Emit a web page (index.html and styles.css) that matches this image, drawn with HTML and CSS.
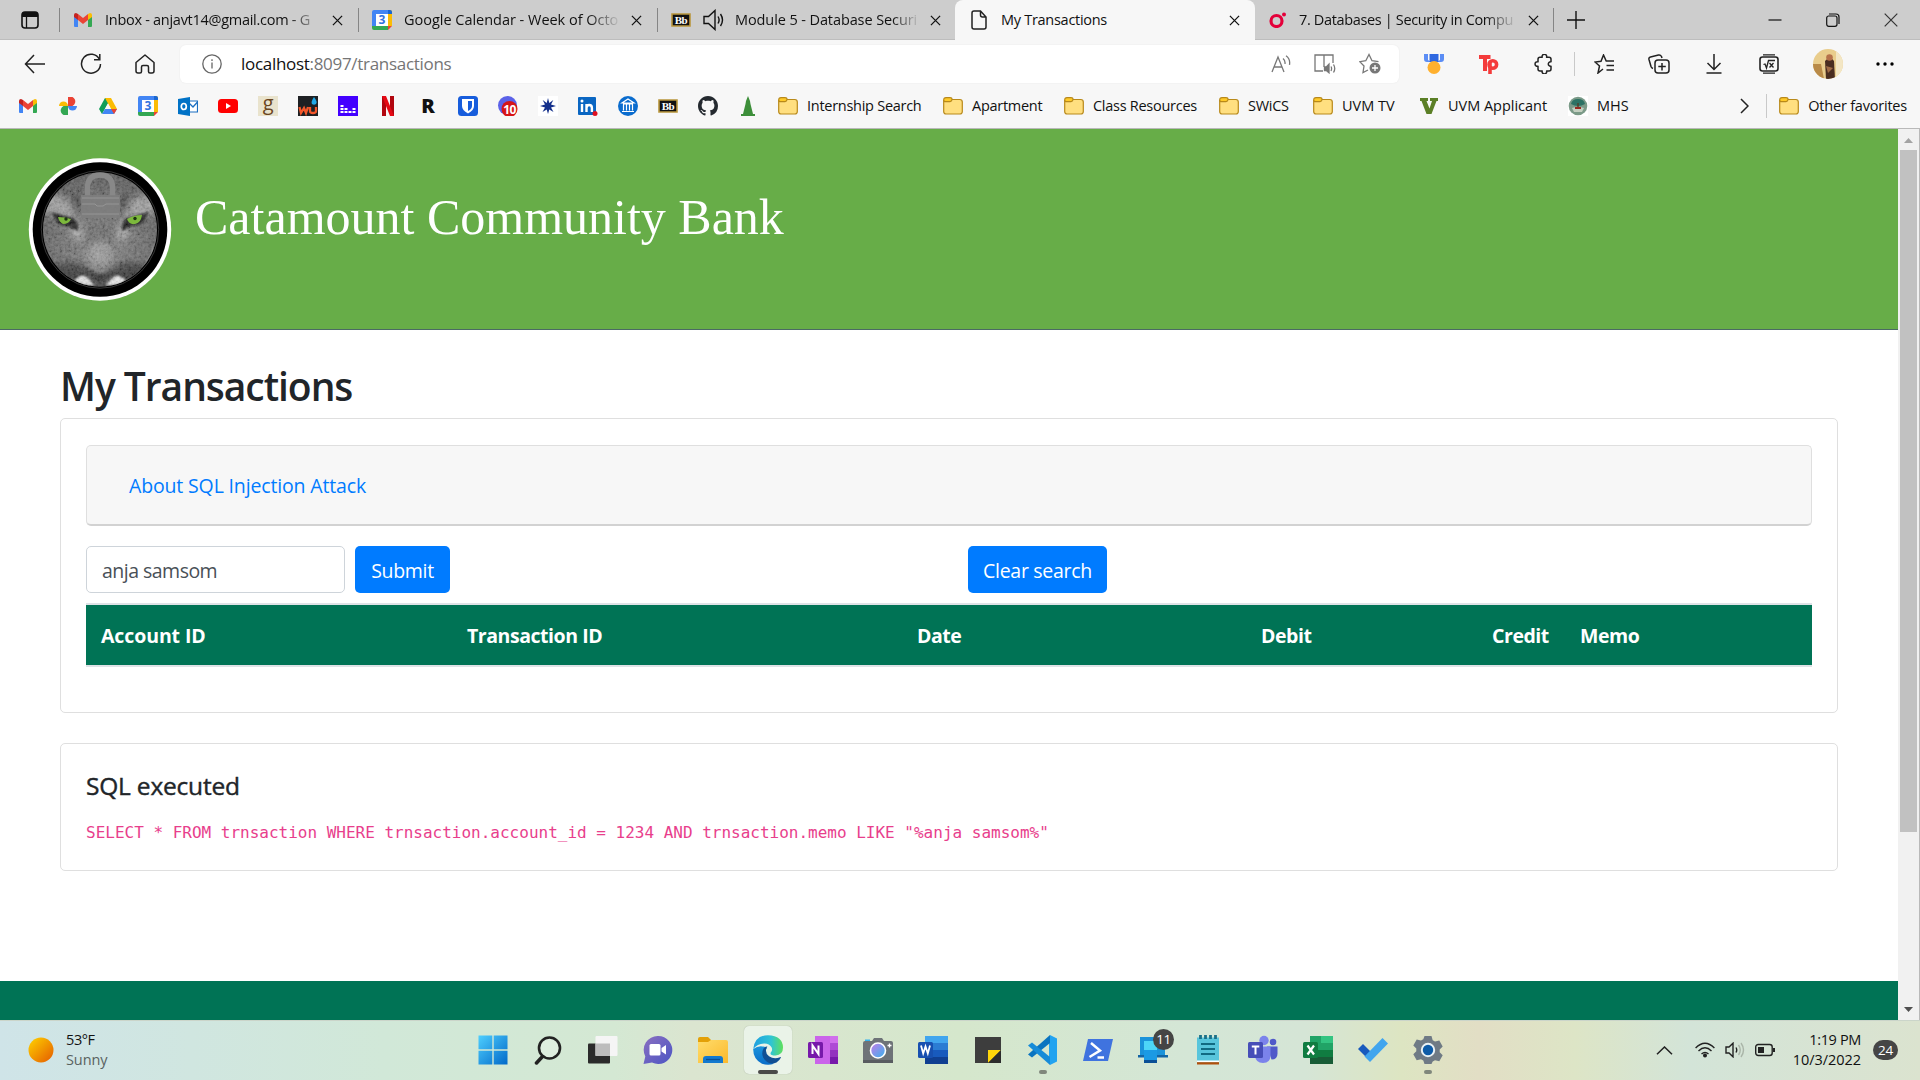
FILE: index.html
```html
<!DOCTYPE html>
<html lang="en">
<head>
<meta charset="utf-8">
<title>My Transactions</title>
<link rel="stylesheet" href="styles.css">
</head>
<body>
<svg width="0" height="0" class="defs">
  <defs>
    <linearGradient id="sun" x1="0" y1="0" x2="1" y2="1"><stop offset="0" stop-color="#ffd400"/><stop offset="1" stop-color="#e45a00"/></linearGradient>
    <linearGradient id="win" x1="0" y1="0" x2="30" y2="30" gradientUnits="userSpaceOnUse"><stop offset="0" stop-color="#4fd0ff"/><stop offset="1" stop-color="#0067c8"/></linearGradient>
    <linearGradient id="edge1" x1="0" y1="0" x2="1" y2="0"><stop offset="0" stop-color="#1f9fe0"/><stop offset=".6" stop-color="#2fc4d4"/><stop offset="1" stop-color="#5fe05a"/></linearGradient>
    <linearGradient id="edge2" x1="0" y1="0" x2="0" y2="1"><stop offset="0" stop-color="#1a93dc"/><stop offset="1" stop-color="#0a6cc8"/></linearGradient>
    <linearGradient id="chat" x1="0" y1="0" x2="1" y2="1"><stop offset="0" stop-color="#8b6fc0"/><stop offset="1" stop-color="#4b55c4"/></linearGradient>
    <linearGradient id="folderG" x1="0" y1="0" x2="1" y2="1"><stop offset="0" stop-color="#ffdc6b"/><stop offset="1" stop-color="#fbb92c"/></linearGradient>
    <linearGradient id="lens" x1="0" y1="0" x2="1" y2="1"><stop offset="0" stop-color="#c77be8"/><stop offset="1" stop-color="#35b3ee"/></linearGradient>
    <radialGradient id="fur" cx=".5" cy=".65" r=".6"><stop offset="0" stop-color="#7d7d7d"/><stop offset=".5" stop-color="#696969"/><stop offset="1" stop-color="#505050"/></radialGradient>
    <clipPath id="face"><circle cx="80" cy="79.5" r="57"/></clipPath>
    <filter id="soft"><feGaussianBlur stdDeviation="3.500"/></filter>
    <filter id="soft1"><feGaussianBlur stdDeviation="1.100"/></filter>
    <filter id="grain"><feTurbulence type="fractalNoise" baseFrequency=".35" numOctaves="3" seed="4"/><feColorMatrix type="matrix" values="1.500 0 0 0 -.25 1.500 0 0 0 -.25 1.500 0 0 0 -.25 0 0 0 0 .22"/></filter>
    <symbol id="i-close" viewBox="0 0 12 12"><path d="M1 1l10 10M11 1L1 11" stroke="#111" stroke-width="1.4" fill="none"/></symbol>
    <symbol id="i-gmail" viewBox="0 0 18 14"><path d="M0 2v11q0 1 1 1h3V6z" fill="#4285f4"/><path d="M18 2v11q0 1-1 1h-3V6z" fill="#34a853"/><path d="M0 2Q0 0 2 0l2 1v6L0 4z" fill="#c5221f"/><path d="M18 2q0-2-2-2l-2 1v6l4-3z" fill="#fbbc04"/><path d="M4 1l5 4 5-4v6l-5 4-5-4z" fill="#ea4335"/></symbol>
    <symbol id="i-cal" viewBox="0 0 20 20"><path d="M0 2q0-2 2-2h14v4H4v12H0z" fill="#4285f4"/><path d="M16 0h2q2 0 2 2v14h-4z" fill="#fbbc04"/><path d="M16 0h2q2 0 2 2v2h-4z" fill="#1967d2"/><path d="M0 16h16v4H2q-2 0-2-2z" fill="#34a853"/><path d="M16 16h4l-4 4z" fill="#ea4335"/><path d="M4 4h12v12H4z" fill="#fff"/><text x="10" y="14.2" text-anchor="middle" class="t-cal">3</text></symbol>
    <symbol id="i-bb" viewBox="0 0 20 14"><path d="M1 1h18v12H1z" fill="#111" stroke="#b9963c" stroke-width="1.6"/><text x="10" y="11" text-anchor="middle" class="t-bb">Bb</text></symbol>
    <symbol id="i-folder" viewBox="0 0 20 18"><path d="M.7 3v11.500q0 2.500 2.500 2.500h13.600q2.500 0 2.500-2.500V5q0-2.500-2.500-2.500H9" fill="#ffdf80" stroke="#b8891a" stroke-width="1.200"/><path d="M.7 3q0-2.300 2.300-2.300h4q2 0 2 1.800T7 4.600H2.500Q.7 4.600.7 3z" fill="#ffca28" stroke="#b8891a" stroke-width="1.200"/></symbol>
  </defs>
</svg>

<header class="tabs">
  <div class="tab-menu"><svg width="18" height="18" viewBox="0 0 18 18"><rect x="1" y="1" width="16" height="16" rx="3" fill="none" stroke="#111" stroke-width="1.600"/><path d="M1 6V4q0-3 3-3h10q3 0 3 3v2z" fill="#111"/><path d="M5.500 6v11" stroke="#111" stroke-width="1.300"/></svg></div>
  <div class="tab"><svg class="fav" width="18" height="14"><use href="#i-gmail"/></svg><span class="label fade inbox">Inbox - anjavt14@gmail.com - G</span><svg class="x" width="11" height="11"><use href="#i-close"/></svg></div>
  <div class="tab"><svg class="fav" width="20" height="20"><use href="#i-cal"/></svg><span class="label fade gcal">Google Calendar - Week of Octo</span><svg class="x" width="11" height="11"><use href="#i-close"/></svg></div>
  <div class="tab third"><svg class="fav" width="20" height="14"><use href="#i-bb"/></svg><svg class="spk" width="21" height="22" viewBox="0 0 21 22" fill="none" stroke="#111" stroke-width="1.400"><path d="M1 7.500h4.500L12 1.500v19L5.500 14.500H1zM15 7.500q2.200 3.500 0 7M17.500 5q4 6 0 12"/></svg><span class="label fade module">Module 5 - Database Securi</span><svg class="x" width="11" height="11"><use href="#i-close"/></svg></div>
  <div class="tab active"><svg class="fav" width="16" height="20" viewBox="0 0 16 20" fill="none" stroke="#222" stroke-width="1.500"><path d="M3 1h6.500L15 7v10q0 2-2 2H3q-2 0-2-2V3q0-2 2-2zM9.500 1v4q0 2 2 2H15"/></svg><span class="label">My Transactions</span><svg class="x" width="11" height="11"><use href="#i-close"/></svg></div>
  <div class="tab last"><svg class="fav" width="18" height="16" viewBox="0 0 18 16"><ellipse cx="7.500" cy="9" rx="5.500" ry="5.500" fill="none" stroke="#e4003a" stroke-width="3.200"/><circle cx="15" cy="2.500" r="2" fill="#e4003a"/></svg><span class="label fade">7. Databases | Security in Compu</span><svg class="x" width="11" height="11"><use href="#i-close"/></svg></div>
  <svg class="plus" width="18" height="18" viewBox="0 0 18 18"><path d="M9 0v18M0 9h18" stroke="#111" stroke-width="1.400"/></svg>
  <div class="win-ctl">
    <svg width="14" height="14" viewBox="0 0 14 14"><path d="M.5 7h13" stroke="#111" stroke-width="1.200"/></svg>
    <svg width="14" height="14" viewBox="0 0 14 14" fill="none" stroke="#111" stroke-width="1.200"><rect x=".7" y="3" width="10.300" height="10.300" rx="2"/><path d="M3 1h7q3 0 3 3v7"/></svg>
    <svg width="14" height="14" viewBox="0 0 14 14"><path d="M.7.7l12.600 12.600M13.300.7L.7 13.300" stroke="#333" stroke-width="1.200"/></svg>
  </div>
</header>

<nav class="toolbar">
  <div class="nav-btns">
    <svg width="22" height="20" viewBox="0 0 22 20" fill="none" stroke="#222" stroke-width="1.500"><path d="M21 10H1.500M10 1L1.500 10l8.500 9"/></svg>
    <svg width="22" height="22" viewBox="0 0 22 22" fill="none" stroke="#222" stroke-width="1.500"><path d="M19.500 6.500A9.500 9.500 0 1 0 20.500 11M19.800 1v5.800H14"/></svg>
    <svg width="20" height="20" viewBox="0 0 20 20" fill="none" stroke="#222" stroke-width="1.500" stroke-linejoin="round"><path d="M1 8.500L10 1l9 7.500V17q0 2-2 2h-2q-1.500 0-1.500-1.500V13q0-1.500-1.500-1.500H8Q6.500 11.500 6.500 13v4.500Q6.500 19 5 19H3q-2 0-2-2z"/></svg>
  </div>
  <div class="address">
    <svg width="20" height="20" viewBox="0 0 20 20" fill="none" stroke="#666" stroke-width="1.300"><circle cx="10" cy="10" r="9.200"/><path d="M10 8.500v6M10 5.200v1.700"/></svg>
    <span class="url"><b>localhost</b>:8097/transactions</span>
    <div class="addr-icons">
      <svg width="20" height="18" viewBox="0 0 20 18" fill="none" stroke="#777" stroke-width="1.300"><path d="M1 17L7 2l6 15M3.200 12h7.700M12 3.500q2.500 2 2 5.500M15 .8q4.500 3 3.500 9"/></svg>
      <svg width="22" height="20" viewBox="0 0 22 20" fill="none" stroke="#777" stroke-width="1.300"><path d="M9 17H1V1h9v12M10 1h9v8"/><path d="M10.500 13h1.800l2.700-2.800v8.600L12.300 16.500h-1.800z" fill="#777"/><path d="M17 12.500q1.200 2 0 4.500M19.500 10.500q2.500 4 0 8"/></svg>
      <svg width="22" height="21" viewBox="0 0 22 21" fill="none" stroke="#777" stroke-width="1.300"><path d="M9 17l-5 2.500 1-6.500-4.200-4.300 6-1L10 1.500l3 6.200 6.500 1"/><circle cx="16" cy="15" r="5.500" fill="#777" stroke="none"/><path d="M16 12v6M13 15h6" stroke="#fff"/></svg>
    </div>
  </div>
  <div class="ext-icons">
    <svg width="20" height="20" viewBox="0 0 20 20"><path d="M0 0h4v6l3 2H3Q0 8 0 5zM20 0h-4v6l-3 2h4q3 0 3-3z" fill="#5b8df5"/><path d="M5.500 0h9v8h-9z" fill="#2f68e0"/><circle cx="10" cy="13.500" r="6.500" fill="#ffb02e"/></svg>
    <svg width="20" height="20" viewBox="0 0 20 20" fill="none" stroke="#f43b3b" stroke-width="4"><path d="M0 3h11.500M6 3v14"/><circle cx="13.800" cy="10.500" r="3.800" stroke-width="3.600"/><path d="M11 8v12" stroke-width="3.600"/></svg>
    <svg width="20" height="20" viewBox="0 0 20 20" fill="none" stroke="#222" stroke-width="1.500" stroke-linejoin="round"><path d="M6 3.200h2.200a2.300 2.300 0 1 1 4.400 0H15q2 0 2 2v2.600h-.5a2.200 2.200 0 1 0 0 4.400h.5V15q0 2-2 2h-2.400a2.300 2.300 0 1 1-4.400 0H6q-2 0-2-2v-2.800a2.300 2.300 0 1 1 0-4.400V5.200q0-2 2-2z"/></svg>
    <i class="sep"></i>
    <svg width="21" height="20" viewBox="0 0 21 20" fill="none" stroke="#222" stroke-width="1.500"><path d="M9 15l-5 4 1.500-7L1 8l6-.800L9.500 1l2.700 6H20M12.500 11.500H20M12.500 16H20"/></svg>
    <svg width="22" height="20" viewBox="0 0 22 20" fill="none" stroke="#222" stroke-width="1.500"><rect x="7" y="6" width="14" height="13" rx="3"/><path d="M14 9v7.500M10.300 12.600h7.500M5 14.500q-1.500-.5-2-2L1 5.500Q.5 3.500 2.500 3l8-2q2-.400 3 1.500l.5 1.500"/></svg>
    <svg width="16" height="20" viewBox="0 0 16 20" fill="none" stroke="#222" stroke-width="1.500"><path d="M8 0v15M1.500 9L8 15.500 14.500 9M.5 19h15"/></svg>
    <svg width="20" height="20" viewBox="0 0 20 20" fill="none" stroke="#222" stroke-width="1.600"><rect x="1" y="3" width="18" height="14" rx="2.500"/><path d="M4 .9h12M4 19.100h12M4.500 10.500L6 10l1.500 4L9.500 6.500H16M10.500 9l4 4.500M14.500 9l-4 4.500" stroke-width="1.300"/></svg>
    <svg width="30" height="30" viewBox="0 0 30 30"><clipPath id="av"><circle cx="15" cy="15" r="15"/></clipPath><g clip-path="url(#av)"><path d="M0 0h30v30H0z" fill="#e9cd8c"/><path d="M23 0h7v30h-7z" fill="#f3e6c4"/><path d="M0 15h8l3 15H0z" fill="#b98a48"/><path d="M12 12q5-6 9 0l1 18h-9z" fill="#4a2d20"/><circle cx="16.500" cy="8.500" r="3.300" fill="#b5714a"/><path d="M13 17l7 2-5 5z" fill="#a06b45"/></g></svg>
    <svg width="18" height="4" viewBox="0 0 18 4"><circle cx="2" cy="2" r="1.700"/><circle cx="9" cy="2" r="1.700"/><circle cx="16" cy="2" r="1.700"/></svg>
  </div>
</nav>

<nav class="bookmarks">
  <div class="bm-icons">
    <span><svg width="18" height="14"><use href="#i-gmail"/></svg></span>
    <span><svg width="18" height="18" viewBox="0 0 18 18"><path d="M9 0v9h4.500A4.700 4.700 0 0 0 9 0z" fill="#ea4335"/><path d="M0 9a4.500 4.500 0 0 1 9 0z" fill="#fbbc04"/><path d="M18 9H9a4.500 4.500 0 0 0 9 0z" fill="#4285f4"/><path d="M9 18V9H4.500A4.700 4.700 0 0 0 9 18z" fill="#34a853"/></svg></span>
    <span><svg width="18" height="16" viewBox="0 0 18 16"><path d="M6 0h6L3 16l-3-5z" fill="#0f9d58"/><path d="M6 0h6l6 11h-6z" fill="#fbbc04"/><path d="M6 11h12l-3 5H3z" fill="#4285f4"/><path d="M12 11h6l-3 5z" fill="#ea4335"/><path d="M9 5.500l3 5.500H6z" fill="#f7f7f7"/></svg></span>
    <span><svg width="20" height="20"><use href="#i-cal"/></svg></span>
    <span><svg width="20" height="19" viewBox="0 0 20 19"><path d="M11 4h8.500v11H11z" fill="#fff" stroke="#1b6fc2" stroke-width="1.200"/><path d="M11 6l4 4 4.500-5" stroke="#1b6fc2" stroke-width="1.300" fill="none"/><path d="M0 2l12-2v19L0 17z" fill="#0072c6"/><ellipse cx="5.800" cy="9.500" rx="2.500" ry="3" fill="none" stroke="#fff" stroke-width="1.700"/></svg></span>
    <span><svg width="20" height="14" viewBox="0 0 20 14"><rect width="20" height="14" rx="3.500" fill="#f00"/><path d="M8 4l5 3-5 3z" fill="#fff"/></svg></span>
    <span><i class="sq good">g</i></span>
    <span><svg width="20" height="20" viewBox="0 0 20 20"><path d="M0 0h20v20H0z" fill="#1e2023"/><path d="M1.500 11l1.500 6 3-5 2 5 2-6M12 11v4q0 2 3 2t3-2v-4" fill="none" stroke="#f4572a" stroke-width="2.300"/><path d="M16 1q4 5 2 7-2 1.500-4 0-1.500-2 2-7z" fill="#1fa8e8"/></svg></span>
    <span><svg width="20" height="20" viewBox="0 0 20 20"><path d="M0 0h20v20H0z" fill="#4300ff"/><path d="M2.500 9h3v2h-3zM2.500 12h3v2h-3zM2.500 15h3v2h-3zM6.500 12h3v2h-3zM6.500 15h3v2h-3zM10.500 15h3v2h-3zM14.500 12h3v2h-3zM14.500 15h3v2h-3z" fill="#fff"/></svg></span>
    <span><svg width="12" height="20" viewBox="0 0 12 20"><path d="M0 0h4v20l-4 .300zM8 0h4v20H8z" fill="#b1060f"/><path d="M0 0h4l8 20H8z" fill="#e50914"/></svg></span>
    <span><i class="rr">R</i></span>
    <span><svg width="20" height="20" viewBox="0 0 20 20"><rect width="20" height="20" rx="3.500" fill="#175ddc"/><path d="M4 3h12v7q0 4-6 7.500Q4 14 4 10z" fill="#fff"/><path d="M10 5h4v5q0 3-4 5z" fill="#175ddc"/></svg></span>
    <span><svg width="20" height="20" viewBox="0 0 20 20"><circle cx="9.500" cy="9.500" r="9.500" fill="#5b62e8"/><circle cx="11.500" cy="13" r="8" fill="#d61418"/><text x="11.500" y="17.500" text-anchor="middle" class="t-ten">10</text></svg></span>
    <span><svg width="20" height="20" viewBox="0 0 20 20"><path d="M0 0h20v20H0z" fill="#fff"/><path d="M10 2l1.300 5 4-3L13 8.500l5 1.500-5 1.500 2.500 4.500-4.200-2.500L10 18l-1.300-4.500L4.500 16 7 11.500 2 10l5-1.500L4.700 4l4 3z" fill="#14308c"/></svg></span>
    <span><svg width="20" height="20" viewBox="0 0 20 20"><rect y="1" width="18" height="18" rx="1" fill="#0a66c2"/><path d="M4 8v8M8.500 16V8M8.500 12q0-3 2.700-3t2.700 3v4" stroke="#fff" stroke-width="2.400" fill="none"/><circle cx="4" cy="5" r="1.500" fill="#fff"/><circle cx="17" cy="17.500" r="2.500" fill="#e01020"/></svg></span>
    <span><svg width="20" height="20" viewBox="0 0 20 20"><circle cx="10" cy="10" r="10" fill="#0a6cce"/><path d="M10 3l6 4H4zM5.500 8.500v6M8.500 8.500v6M11.500 8.500v6M14.500 8.500v6M4 15.500h12M5 8h10" fill="none" stroke="#fff" stroke-width="1.200"/></svg></span>
    <span><svg width="20" height="14"><use href="#i-bb"/></svg></span>
    <span><svg width="20" height="20" viewBox="0 0 16 16"><path fill="#24292f" d="M8 0C3.580 0 0 3.580 0 8c0 3.540 2.290 6.530 5.470 7.590.4.070.55-.17.55-.38 0-.19-.01-.82-.01-1.490-2.010.37-2.530-.49-2.690-.94-.09-.23-.48-.94-.82-1.130-.28-.15-.68-.52-.01-.53.63-.01 1.080.58 1.230.82.72 1.210 1.870.87 2.330.66.070-.52.28-.87.51-1.070-1.780-.2-3.640-.89-3.640-3.950 0-.87.31-1.590.82-2.150-.08-.2-.36-1.020.08-2.120 0 0 .67-.21 2.200.82.64-.18 1.320-.27 2-.27s1.360.09 2 .27c1.530-1.040 2.200-.82 2.200-.82.44 1.100.16 1.920.08 2.120.51.56.82 1.270.82 2.150 0 3.070-1.870 3.750-3.650 3.950.29.25.54.73.54 1.480 0 1.070-.01 1.930-.01 2.200 0 .21.15.46.55.38A8.010 8.010 0 0 0 16 8c0-4.420-3.580-8-8-8z"/></svg></span>
    <span><svg width="16" height="20" viewBox="0 0 16 20"><path d="M8 0l2 5 .5 3 1 4 1 4 .5 2h2v2H1v-2h2l.5-2 1-4 1-4L6 5z" fill="#3d8f3a"/></svg></span>
  </div>
  <div class="bm w165"><svg width="20" height="18"><use href="#i-folder"/></svg><span>Internship Search</span></div>
  <div class="bm w121"><svg width="20" height="18"><use href="#i-folder"/></svg><span>Apartment</span></div>
  <div class="bm w155"><svg width="20" height="18"><use href="#i-folder"/></svg><span>Class Resources</span></div>
  <div class="bm w94"><svg width="20" height="18"><use href="#i-folder"/></svg><span>SWiCS</span></div>
  <div class="bm w106"><svg width="20" height="18"><use href="#i-folder"/></svg><span class="wide">UVM TV</span></div>
  <div class="bm w149"><svg width="20" height="18" viewBox="0 0 20 18"><path d="M1 1h8v3H7.500l3 7.500 2.500-7.500h-2V1h8v3h-1.500L12.500 17h-5L2.500 4H1z" fill="#5b7f26"/></svg><span class="wide">UVM Applicant</span></div>
  <div class="bm"><svg width="20" height="20" viewBox="0 0 20 20"><path d="M0 0h20v20H0z" fill="#fff"/><circle cx="10" cy="10" r="9.300" fill="#7b9a88"/><path d="M3 8q1-5 7-5t7 5q-7 4-14 0z" fill="#2c7264"/><path d="M9.300 7h1.400v5H9.300z" fill="#50402c"/><path d="M4 12q6-2 12 0l-2 4H6z" fill="#c3cfc0"/><path d="M7 11h6v2H7z" fill="#97281f"/></svg><span class="wide">MHS</span></div>
  <svg class="more" width="9" height="16" viewBox="0 0 9 16"><path d="M1 1l7 7-7 7" fill="none" stroke="#222" stroke-width="1.500"/></svg>
  <i class="sep"></i>
  <div class="bm"><svg width="20" height="18"><use href="#i-folder"/></svg><span class="other">Other favorites</span></div>
</nav>

<div class="viewport">
  <div class="page">
    <div class="banner">
      <svg class="logo" width="144" height="144" viewBox="8 7 144 144">
        <circle cx="80" cy="79.500" r="71.200" fill="#fff"/><circle cx="80" cy="79.500" r="67.300" fill="#000"/><circle cx="80" cy="79.500" r="58.700" fill="none" stroke="#444" stroke-width=".8"/>
        <g clip-path="url(#face)">
          <path d="M20 18h120v125H20z" fill="url(#fur)"/>
          <g filter="url(#soft)">
            <path d="M20 46q14-6 30 6l6 20-34-10zM140 46q-14-6-30 6l-6 20 34-10z" fill="#999"/>
            <path d="M57 70q6 10 5 22l-12-8 4-6zM103 70q-6 10-5 22l12-8-4-6z" fill="#b0b0b0"/>
            <path d="M26 118q20-8 34-4l14 8 6 18H30zM134 118q-20-8-34-4l-14 8-6 18h54z" fill="#2e2e2e"/>
            <path d="M67 72q13-6 26 0l4 30-17 6-17-6z" fill="#666"/>
            <ellipse cx="80" cy="104" rx="13" ry="12" fill="#969696"/>
            <path d="M50 46q5-3 10 2l-1 14q-8-2-9-16zM110 46q-5-3-10 2l1 14q8-2 9-16z" fill="#303030"/>
          </g>
          <g filter="url(#soft1)">
            <path d="M31 62q13 4 22 6 6 5 5 13l-10-5q-10 0-13-7zM129 62q-13 4-22 6-6 5-5 13l10-5q10 0 13-7z" fill="#0c0c0c"/>
            <path d="M54 131q5-6 11-5 6 4 9 9-9 2-20-4zM106 131q-5-6-11-5-6 4-9 9 9 2 20-4z" fill="#e6e6e6"/>
            <path d="M66 122q14 4 28 0l-6 6-6 4-2 6-2-6-6-4z" fill="#262626"/>
            <path d="M123 117q9-10 12-22-1 14-10 23z" fill="#ccc"/>
          </g>
          <path d="M20 18h120v125H20z" filter="url(#grain)"/>
          <path d="M38 67q7 0 13 2-2 5-8 5-4-2-5-7zM122 65q-8 0-15 4 2 6 8 5 6-1 7-9z" fill="#7cb83c"/>
          <circle cx="46" cy="69" r="1.700" fill="#1c3510"/><circle cx="115" cy="68.500" r="1.700" fill="#1c3510"/>
        </g>
        <path d="M67.500 46V38q0-13 12.500-13t12.500 13v8" fill="none" stroke="#888" stroke-width="5.500"/><rect x="61" y="45" width="39" height="23" fill="#7e7e7e" opacity=".92"/><path d="M62 48h37M62 54h13l2 2h6l3-2h13M62 64h37" fill="none" stroke="#989898" stroke-width=".9"/>
      </svg>
      <h1>Catamount Community Bank</h1>
    </div>
    <main>
      <h2><span>My Transactions</span></h2>
      <section class="card results">
        <div class="about"><a>About SQL Injection Attack</a></div>
        <div class="search">
          <div class="field"><span>anja samsom</span></div>
          <button class="submit"><span>Submit</span></button>
          <button class="clear"><span>Clear search</span></button>
        </div>
        <div class="thead"><span class="c1">Account ID</span><span class="c2">Transaction ID</span><span class="c3">Date</span><span class="c4">Debit</span><span class="c5">Credit</span><span class="c6">Memo</span></div>
      </section>
      <section class="card sql">
        <h3>SQL executed</h3>
        <code>SELECT * FROM trnsaction WHERE trnsaction.account_id = 1234 AND trnsaction.memo LIKE "%anja samsom%"</code>
      </section>
    </main>
    <footer></footer>
  </div>
  <div class="scroll"><svg width="9" height="5" viewBox="0 0 9 5"><path d="M0 5l4.500-5L9 5z" fill="#a3a3a3"/></svg><div class="thumb"></div><svg class="down" width="9" height="5" viewBox="0 0 9 5"><path d="M0 0h9L4.500 5z" fill="#505050"/></svg></div>
</div>

<div class="taskbar">
  <div class="weather"><svg width="26" height="26" viewBox="0 0 26 26"><circle cx="13" cy="13" r="12.500" fill="url(#sun)"/></svg><div><p>53°F</p><p class="dim">Sunny</p></div></div>
  <div class="apps">
    <span><svg viewBox="0 0 30 30"><path d="M.5.5h13.800v13.800H.5zM15.700.5h13.800v13.800H15.700zM.5 15.700h13.800v13.800H.5zM15.700 15.700h13.800v13.800H15.700z" fill="url(#win)"/></svg></span>
    <span><svg viewBox="0 0 30 30" fill="none" stroke="#222"><circle cx="16.500" cy="13" r="10.500" fill="#ffffff40" stroke-width="2.600"/><path d="M9.500 21.500L3.500 28" stroke-width="3.500" stroke-linecap="round"/></svg></span>
    <span><svg viewBox="0 0 30 30"><rect y="8.500" width="22" height="20" rx="1" fill="#2b2b2b"/><rect x="7.500" y="1" width="22" height="20" rx="1" fill="#f5f5f5"/><path d="M7.500 8.500H22V21H7.500z" fill="#bdbdbd"/></svg></span>
    <span><svg viewBox="0 0 30 30"><path d="M15 1a14 14 0 1 1-6 26.500L.5 29l1.800-7.500A14 14 0 0 1 15 1z" fill="url(#chat)"/><rect x="6.500" y="9" width="11" height="11.500" rx="1.500" fill="#fff"/><path d="M18.500 13l4.500-3v9.500L18.500 16.500z" fill="#fff"/></svg></span>
    <span><svg viewBox="0 0 30 30"><path d="M0 4q0-2 2-2h8l3 3v8H0z" fill="#e3a008"/><path d="M0 7h10l3-2h15q2 0 2 2v21H0z" fill="url(#folderG)"/><path d="M5 28v-4q0-3 3-3h14q3 0 3 3v4z" fill="#1379cf"/><path d="M8 24.500h14" stroke="#0b4f95" stroke-width="1.300"/></svg></span>
    <span class="open"><svg viewBox="0 0 30 30"><path d="M.2 14Q0 24 9 28.700q6 2.300 12 0Q12 26 12 18q0-3 2-5-7-4-13.800 1z" fill="url(#edge2)"/><path d="M10.500 13.500q-3 6 1 11 5 6 12 3 3-2 4.500-5-.2-.8-1-.2-6 2.500-11-1-3.500-3-3-6.500 0-2 1.500-3-2-.8-4 1.700z" fill="#114f94"/><path d="M.2 14Q2 .2 15 .2 30 1 30 12.500q0 7.500-7.500 8-5 0-5-2 0-.8 1-2 1.200-2 0-4.200Q16.500 8.500 11.500 8.500 4.500 8.500.2 14z" fill="url(#edge1)"/></svg><i class="pill"></i></span>
    <span><svg viewBox="0 0 30 30"><path d="M7 1h15v28H7z" fill="#ca64ea"/><path d="M22 1h8v7h-8z" fill="#d070ec"/><path d="M22 8h8v7h-8z" fill="#ae4bd5"/><path d="M22 15h8v7h-8z" fill="#9332bf"/><path d="M22 22h8v7h-8z" fill="#7719aa"/><rect y="7" width="15" height="16" rx="1.500" fill="#7719aa"/><path d="M4.500 19V10.500l6 8.500v-8.500" fill="none" stroke="#fff" stroke-width="2"/></svg></span>
    <span><svg viewBox="0 0 30 30"><path d="M2 4.500h5v4H2z" fill="#35b3ee"/><path d="M0 8q0-2 2-2h7l2-3h8l2 3h7q2 0 2 2v20H0z" fill="#6e7378"/><path d="M0 25h30v3H0z" fill="#585c60"/><circle cx="15" cy="15.500" r="7.500" fill="url(#lens)" stroke="#fff" stroke-width="1.600"/><path d="M26.500 8.500v4M24.500 10.500h4" stroke="#fff" stroke-width="1.300"/></svg></span>
    <span><svg viewBox="0 0 30 30"><path d="M7 1h23v7H7z" fill="#41a5ee"/><path d="M7 8h23v7H7z" fill="#2b7cd3"/><path d="M7 15h23v7H7z" fill="#185abd"/><path d="M7 22h23v7H7z" fill="#103f91"/><rect y="7" width="15" height="16" rx="1.500" fill="#1750b0"/><path d="M3 10.500l2.200 8 2.300-7 2.300 7 2.200-8" fill="none" stroke="#fff" stroke-width="1.800"/></svg></span>
    <span><svg viewBox="0 0 30 30"><path d="M2 2h26v26H2z" fill="#3d3d3d"/><path d="M15 28V15h13z" fill="#ffd60a"/><path d="M15 28l13-13v13z" fill="#2c2c2c"/></svg></span>
    <span><svg viewBox="0 0 30 30"><path d="M22 0l7 3.500v23L22 30l-1-8V8z" fill="#22a3f0"/><path d="M22 0v8L4 22.500l-4-3z" fill="#0a74c0"/><path d="M0 10.500l4-3L22 22v8z" fill="#168bd8"/></svg><i class="dot"></i></span>
    <span><svg viewBox="0 0 30 30"><path d="M5 4h25l-5 22H0z" fill="#3f73df"/><path d="M8 8l9 7.500L6.500 22M14.500 22.500H21" fill="none" stroke="#fff" stroke-width="2.500"/></svg></span>
    <span><svg viewBox="0 0 30 30"><path d="M2 2h25v19H2z" fill="#1b93da"/><path d="M0 20h30v2.500H0z" fill="#1264a5"/><path d="M6 6h13v22H6z" fill="#1b9ae4"/><path d="M6 6h13v9H6z" fill="#4dd5f8"/><path d="M6 25h13v3H6z" fill="#0a4f96"/></svg><b class="badge">11</b></span>
    <span><svg viewBox="0 0 30 30"><path d="M4 2.500h22v25H4z" fill="#58c5dc"/><path d="M4 25.500h22v1.500H4z" fill="#fff"/><path d="M4 27.200h22v2.300H4z" fill="#b0500c"/><path d="M8 9h14M8 14h14M8 19h14" stroke="#116a82" stroke-width="1.900"/><path d="M7.500 0v4M12.500 0v4M17.500 0v4M22.500 0v4" stroke="#1a7089" stroke-width="2.800"/></svg></span>
    <span><svg viewBox="0 0 30 30"><circle cx="25" cy="7" r="3.300" fill="#5059c9"/><path d="M19 11.500h10.500v7q0 6-6 6z" fill="#5059c9"/><circle cx="16" cy="5.500" r="4.700" fill="#7b83eb"/><path d="M8 11.500h14.500V20q0 8-7.500 8t-8-8z" fill="#7b83eb"/><rect y="7" width="15" height="16" rx="1.500" fill="#464eb8"/><path d="M3.800 11.500h7.500M7.500 11.500V19.500" stroke="#fff" stroke-width="2"/></svg></span>
    <span><svg viewBox="0 0 30 30"><path d="M7 1h12v14H7z" fill="#21a366"/><path d="M18 1h12v7H18z" fill="#33c481"/><path d="M18 8h12v7H18z" fill="#21a366"/><path d="M7 15h23v7H7z" fill="#107c41"/><path d="M7 22h23v7H7z" fill="#185c37"/><rect y="7" width="15" height="16" rx="1.500" fill="#107c41"/><path d="M4.500 10.500l6.500 9M11 10.500l-6.500 9" stroke="#fff" stroke-width="2.200"/></svg></span>
    <span><svg viewBox="0 0 30 30"><path d="M5 9l10 10-5 5L0 14z" fill="#185abd"/><path d="M24.500 3L30 8.500 12 27l-5.500-5.500z" fill="#41a5ee"/></svg></span>
    <span><svg viewBox="0 0 30 30"><path d="M11.500 1h7l1.200 4.200 2.300 1.300 4.300-1 3.400 6-3 3v2.800l3 3-3.400 6-4.300-1-2.300 1.300L18.500 29h-7l-1.200-3.400L8 24.300l-4.300 1-3.400-6 3-3v-2.800l-3-3 3.400-6 4.300 1 2.300-1.300z" fill="#6f7a85"/><circle cx="15" cy="15" r="6.200" fill="#0d5ba8" stroke="#e9f1f5" stroke-width="2"/></svg><i class="dot"></i></span>
  </div>
  <div class="tray">
    <svg class="up" width="17" height="9" viewBox="0 0 17 9"><path d="M1 8.300L8.500 1 16 8.300" fill="none" stroke="#222" stroke-width="1.500"/></svg>
    <svg class="wifi" width="20" height="16" viewBox="0 0 20 16" fill="none" stroke="#222" stroke-width="1.400"><path d="M.6 6Q10-3.500 19.400 6M3.500 9q6.500-6.300 13 0M6.500 12q3.500-3.200 7 0"/><circle cx="10" cy="13.500" r="1.300" fill="#222"/></svg>
    <svg class="vol" width="20" height="16" viewBox="0 0 20 16" fill="none" stroke="#222" stroke-width="1.400"><path d="M1 5h3l4-3.800v13.600L4 11H1zM11 5.500q1.500 2.500 0 5"/><path d="M13.500 3q3.500 5 0 10M16 1q5 7 0 14" stroke="#aab5a8"/></svg>
    <svg class="bat" width="20" height="14" viewBox="0 0 20 14"><rect x=".7" y="1.500" width="16.500" height="11" rx="2.500" fill="none" stroke="#222" stroke-width="1.400"/><path d="M3 4h6v6H3zM18 5h2v4h-2z" fill="#222"/></svg>
    <div class="clock"><p>1:19 PM</p><p class="date">10/3/2022</p></div>
    <b class="count">24</b>
  </div>
</div>
</body>
</html>
```
FILE: styles.css
```css
* { box-sizing: border-box; }
body { margin: 0; width: 1920px; height: 1080px; overflow: hidden; display: flex; flex-direction: column; font-family: "Open Sans", "Noto Sans", sans-serif; color: #111; background: #fff; }
svg { flex: none; display: block; }
p, h1, h2, h3 { margin: 0; font-weight: 400; }
i { font-style: normal; }
.defs { position: absolute; }
.viewport, .taskbar { flex: none; }

/* tab strip */
.tabs { flex: none; height: 40px; background: #cdcdcd; display: flex; align-items: center; font-size: 14.5px; letter-spacing: -.35px; box-shadow: inset 0 -1px #bdbdbd; }
.tab-menu { width: 59px; padding-left: 21px; }
.tab { width: 299px; height: 24px; border-left: 1px solid #858585; display: flex; align-items: center; padding: 0 15px 0 13px; }
.tab .fav { margin-right: 12px; }
.tab .fav:has(+ .inbox) { margin: 0 13px 0 1px; }
.tab .spk { margin: 0 11px 0 0; }
.tab .label { flex: 1; white-space: nowrap; line-height: 24px; margin-right: 8px; min-width: 0; }
.tab .x { width: 11px; }
.inbox { letter-spacing: -.28px; }
.gcal { letter-spacing: -.02px; }
.module { letter-spacing: -.1px; }
.fade { -webkit-mask-image: linear-gradient(90deg, #000 84%, transparent 99%); mask-image: linear-gradient(90deg, #000 84%, transparent 99%); }
.tab.third { width: 298px; padding-right: 14px; }
.tab.active { height: 40px; width: 300px; background: #f7f7f7; border: 0; border-radius: 8px 8px 0 0; padding: 0 15px 0 16px; }
.tab.active .fav { margin-right: 14px; }
.tab.active .label { letter-spacing: -.28px; }
.tab.last { width: 299px; border-left: 0; border-right: 1px solid #858585; padding: 0 14px; }
.plus { margin-left: 13px; }
.win-ctl { margin-left: auto; display: flex; gap: 44px; padding-right: 22px; }

/* toolbar */
.toolbar { flex: none; height: 48px; background: #f7f7f7; display: flex; align-items: center; padding-bottom: 1px; }
.nav-btns { width: 180px; padding-left: 24px; display: flex; gap: 33.500px; align-items: center; }
.address { width: 1219px; height: 38px; background: #fff; border-radius: 6px; display: flex; align-items: center; padding-left: 22px; box-shadow: 0 0 2px #0001; }
.url { margin-left: 19px; font-size: 17px; color: #757575; letter-spacing: -.3px; }
.url b { font-weight: 400; color: #111; }
.addr-icons { margin-left: auto; display: flex; gap: 23px; align-items: center; padding-right: 18px; }
.ext-icons { flex: 1; display: grid; grid-template-columns: 55px 55px 55px 5px 55px 55px 55px 55px 62px 52px; align-items: center; justify-items: center; padding-left: 7.500px; }
.sep { width: 1px; height: 24px; background: #c9c9c9; }

/* favourites */
.bookmarks { flex: none; height: 41px; background: #f7f7f7; border-bottom: 1px solid #b9b9b9; display: flex; align-items: center; padding: 0 13px 4px 8px; font-size: 14.5px; letter-spacing: -.27px; white-space: nowrap; }
.bm-icons { display: flex; width: 770px; }
.bm-icons span { width: 40px; height: 20px; display: flex; align-items: center; justify-content: center; }
.sq { width: 20px; height: 20px; background: #e9e3cd; color: #6b4520; font-size: 20px; line-height: 14px; text-align: center; }
.rr { font-weight: 800; font-size: 20px; line-height: 20px; }
.bm { display: flex; align-items: center; gap: 9px; }
.bm span { padding-bottom: 2px; }
.bm .wide { letter-spacing: -.02px; }
.bm .other { letter-spacing: -.21px; }
.w165 { width: 165px; } .w121 { width: 121px; } .w155 { width: 155px; } .w94 { width: 94px; } .w106 { width: 106px; } .w149 { width: 149px; }
.more { margin-left: auto; }
.bookmarks .sep { margin: 0 12px 0 17px; }
.t-cal { font: 700 12px "Open Sans", sans-serif; fill: #3273e0; letter-spacing: 0; }
.t-bb { font: 700 11px "Liberation Serif", serif; fill: #fff; letter-spacing: -.5px; }
.t-ten { font: 700 12px "Open Sans", sans-serif; fill: #fff; letter-spacing: -.5px; }

/* bank page */
.viewport { height: 891px; display: flex; }
.page { width: 1898px; display: flex; flex-direction: column; }
.banner { height: 201px; background: #67ad48; border-bottom: 1px solid #4b6a64; display: flex; padding: 28px 0 0 28px; }
.banner h1 { font: 50px/58px "Liberation Serif", "Times New Roman", serif; color: #fff; margin: 31px 0 0 23px; white-space: nowrap; }
main { flex: 1; padding: 32px 60px 0; }
h2 { font-weight: 600; font-size: 39px; line-height: 47px; height: 56px; color: #212529; letter-spacing: -1.050px; }
.card { border: 1px solid #dfdfdf; border-radius: 5px; }
.results { height: 295px; padding: 26px 25px; margin-bottom: 30px; }
.about { height: 81px; border: 1px solid #dfdfdf; border-bottom: 2px solid #d2d2d2; border-radius: 5px; background: #f7f7f7; padding: 25px 42px; font-size: 19.500px; line-height: 30px; color: #007bff; letter-spacing: -.15px; }
.search { display: flex; height: 47px; margin: 20px 0 10px; }
.field { width: 259px; border: 1px solid #ced4da; border-radius: 5px; padding-left: 15px; font-size: 19.500px; line-height: 47px; color: #495057; margin-right: 10px; letter-spacing: -.52px; }
button { border: 0; background: #007bff; color: #fff; border-radius: 5px; font: 19.500px/46px "Open Sans", sans-serif; padding: 2px 0 0; height: 47px; text-align: center; letter-spacing: -.3px; white-space: nowrap; }
button span { display: block; }
.submit { width: 95px; margin-right: 518px; }
.clear { width: 139px; }
.thead { height: 64px; border-top: 2px solid #dee2e6; border-bottom: 2px solid #dee2e6; background: #007355; color: #fff; font-weight: 700; font-size: 19.500px; line-height: 62px; letter-spacing: -.45px; display: grid; grid-template-columns: 366px 450px 344px 231px 88px 1fr; padding-left: 15px; white-space: nowrap; }
.c1 { letter-spacing: -.1px; }
.sql { height: 128px; padding: 26px 25px; display: flex; flex-direction: column; }
h3 { font-size: 24.500px; line-height: 32px; color: #212529; letter-spacing: -.2px; -webkit-text-stroke: .4px #212529; }
code { font: 16px/24px "DejaVu Sans Mono", monospace; color: #e83e8c; margin-top: 19px; white-space: nowrap; letter-spacing: -.005px; }
footer { height: 39px; background: #007355; }
.scroll { width: 22px; background: #f1f1f1; border-right: 1px solid #b9b9b9; display: flex; flex-direction: column; align-items: center; padding: 9px 0 8px; }
.thumb { width: 17px; height: 682px; background: #c1c1c1; margin-top: 7px; }
.down { margin-top: auto; }

/* taskbar */
.taskbar { height: 60px; display: flex; align-items: center; padding-bottom: 1px; background: linear-gradient(90deg, #cfe4e8 0, #d1e8d8 20%, #d4e8d3 32%, #dbe5d0 36%, #d5e7cc 50%, #d4e6d6 62%, #d5e5d6 68%, #dde5c2 73%, #e2dec5 77%, #dde5c6 82%, #d3e4d8 88%, #dbe3cf 100%); border-top: 1px solid #cbd5ca; }
.weather { width: 469px; padding-left: 28px; display: flex; align-items: center; gap: 12px; font-size: 14.500px; line-height: 20px; letter-spacing: -.4px; }
.dim { color: #59625f; letter-spacing: -.1px; }
.apps { display: flex; width: 987px; }
.apps span { position: relative; width: 48px; height: 48px; margin-right: 7px; flex: none; display: flex; align-items: center; justify-content: center; border-radius: 5px; }
.apps svg { width: 30px; height: 30px; }
.apps .open { background: #eaf3e8; box-shadow: 0 0 1px #0004; }
.pill, .dot { position: absolute; bottom: 0; width: 20px; height: 4px; border-radius: 2px; background: #4a4a48; }
.dot { width: 8px; background: #80877c; }
.badge { position: absolute; left: 24px; top: 3px; width: 21px; height: 21px; border-radius: 50%; background: #454545; color: #fff; font-weight: 400; font-size: 13.500px; line-height: 20px; text-align: center; letter-spacing: -.5px; }
.tray { flex: 1; display: flex; align-items: center; padding-left: 200px; font-size: 14.500px; }
.wifi { margin-left: 22px; }
.vol { margin-left: 10px; }
.bat { margin-left: 10px; }
.clock { width: 86px; text-align: right; line-height: 20px; letter-spacing: -.35px; white-space: nowrap; }
.date { letter-spacing: -.05px; }
.count { margin-left: 12px; width: 25px; height: 20px; border-radius: 10px; background: #454545; color: #fff; font-weight: 400; font-size: 13.500px; line-height: 20px; text-align: center; letter-spacing: -.3px; }
```
